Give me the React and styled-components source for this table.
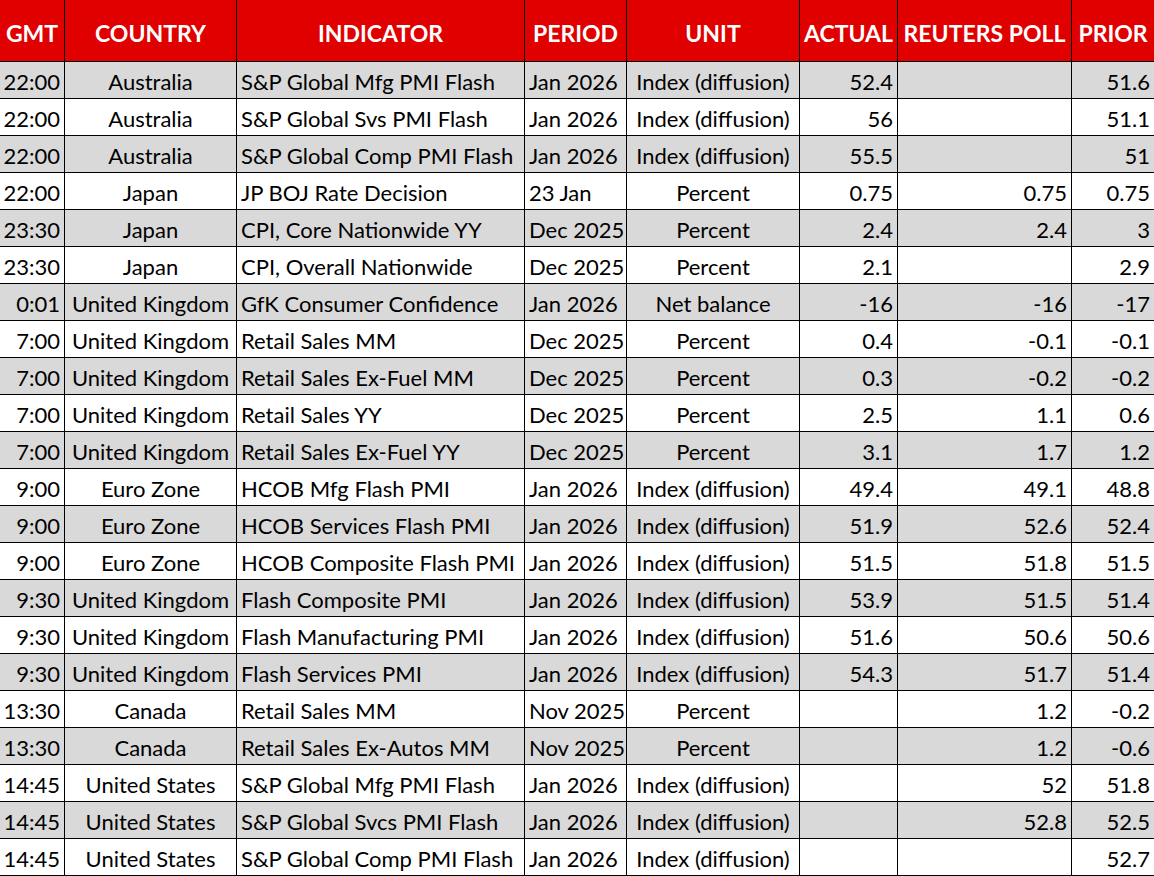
import React from "react";
import styled, { createGlobalStyle } from "styled-components";

const Global = createGlobalStyle`
  html, body { margin: 0; padding: 0; background: #fff; }
  body { font-family: "Lato", "Open Sans", sans-serif; }
`;

const Grid = styled.div`
  display: grid;
  grid-template-columns: 65px 172px 288px 102px 173px 98px 174px 82px;
  width: 1154px;
`;

const HeadCell = styled.div`
  box-sizing: border-box;
  height: 62px;
  background: #e00000;
  color: #fff;
  font-weight: 700;
  font-size: 23px;
  display: flex;
  align-items: flex-end;
  justify-content: center;
  padding-bottom: 14px;
  white-space: nowrap;
  border-bottom: 1px solid #000;
  border-right: ${(p) => (p.$last ? "none" : "1px solid #000")};
`;

const Cell = styled.div`
  box-sizing: border-box;
  height: 37px;
  background: ${(p) => (p.$shade ? "#d9d9d9" : "#fff")};
  color: #000;
  font-size: 22px;
  display: flex;
  align-items: flex-end;
  padding: 0 4px 3px;
  white-space: nowrap;
  overflow: hidden;
  justify-content: ${(p) =>
    p.$align === "right" ? "flex-end" : p.$align === "center" ? "center" : "flex-start"};
  border-bottom: 1px solid #000;
  border-right: ${(p) => (p.$last ? "none" : "1px solid #000")};
`;

const columns = [
  { key: "gmt", label: "GMT", align: "right" },
  { key: "country", label: "COUNTRY", align: "center" },
  { key: "indicator", label: "INDICATOR", align: "left" },
  { key: "period", label: "PERIOD", align: "left" },
  { key: "unit", label: "UNIT", align: "center" },
  { key: "actual", label: "ACTUAL", align: "right" },
  { key: "poll", label: "REUTERS POLL", align: "right" },
  { key: "prior", label: "PRIOR", align: "right" },
];

const IDX = "Index (diffusion)";
const rows = [
  ["22:00", "Australia", "S&P Global Mfg PMI Flash", "Jan 2026", IDX, "52.4", "", "51.6"],
  ["22:00", "Australia", "S&P Global Svs PMI Flash", "Jan 2026", IDX, "56", "", "51.1"],
  ["22:00", "Australia", "S&P Global Comp PMI Flash", "Jan 2026", IDX, "55.5", "", "51"],
  ["22:00", "Japan", "JP BOJ Rate Decision", "23 Jan", "Percent", "0.75", "0.75", "0.75"],
  ["23:30", "Japan", "CPI, Core Nationwide YY", "Dec 2025", "Percent", "2.4", "2.4", "3"],
  ["23:30", "Japan", "CPI, Overall Nationwide", "Dec 2025", "Percent", "2.1", "", "2.9"],
  ["0:01", "United Kingdom", "GfK Consumer Confidence", "Jan 2026", "Net balance", "-16", "-16", "-17"],
  ["7:00", "United Kingdom", "Retail Sales MM", "Dec 2025", "Percent", "0.4", "-0.1", "-0.1"],
  ["7:00", "United Kingdom", "Retail Sales Ex-Fuel MM", "Dec 2025", "Percent", "0.3", "-0.2", "-0.2"],
  ["7:00", "United Kingdom", "Retail Sales YY", "Dec 2025", "Percent", "2.5", "1.1", "0.6"],
  ["7:00", "United Kingdom", "Retail Sales Ex-Fuel YY", "Dec 2025", "Percent", "3.1", "1.7", "1.2"],
  ["9:00", "Euro Zone", "HCOB Mfg Flash PMI", "Jan 2026", IDX, "49.4", "49.1", "48.8"],
  ["9:00", "Euro Zone", "HCOB Services Flash PMI", "Jan 2026", IDX, "51.9", "52.6", "52.4"],
  ["9:00", "Euro Zone", "HCOB Composite Flash PMI", "Jan 2026", IDX, "51.5", "51.8", "51.5"],
  ["9:30", "United Kingdom", "Flash Composite PMI", "Jan 2026", IDX, "53.9", "51.5", "51.4"],
  ["9:30", "United Kingdom", "Flash Manufacturing PMI", "Jan 2026", IDX, "51.6", "50.6", "50.6"],
  ["9:30", "United Kingdom", "Flash Services PMI", "Jan 2026", IDX, "54.3", "51.7", "51.4"],
  ["13:30", "Canada", "Retail Sales MM", "Nov 2025", "Percent", "", "1.2", "-0.2"],
  ["13:30", "Canada", "Retail Sales Ex-Autos MM", "Nov 2025", "Percent", "", "1.2", "-0.6"],
  ["14:45", "United States", "S&P Global Mfg PMI Flash", "Jan 2026", IDX, "", "52", "51.8"],
  ["14:45", "United States", "S&P Global Svcs PMI Flash", "Jan 2026", IDX, "", "52.8", "52.5"],
  ["14:45", "United States", "S&P Global Comp PMI Flash", "Jan 2026", IDX, "", "", "52.7"],
];

export default function App() {
  return (
    <>
      <Global />
      <Grid>
        {columns.map((c, i) => (
          <HeadCell key={c.key} $last={i === columns.length - 1}>
            {c.label}
          </HeadCell>
        ))}
        {rows.map((r, ri) =>
          r.map((v, ci) => (
            <Cell
              key={`${ri}-${ci}`}
              $shade={ri % 2 === 0}
              $align={columns[ci].align}
              $last={ci === columns.length - 1}
            >
              {v}
            </Cell>
          ))
        )}
      </Grid>
    </>
  );
}
